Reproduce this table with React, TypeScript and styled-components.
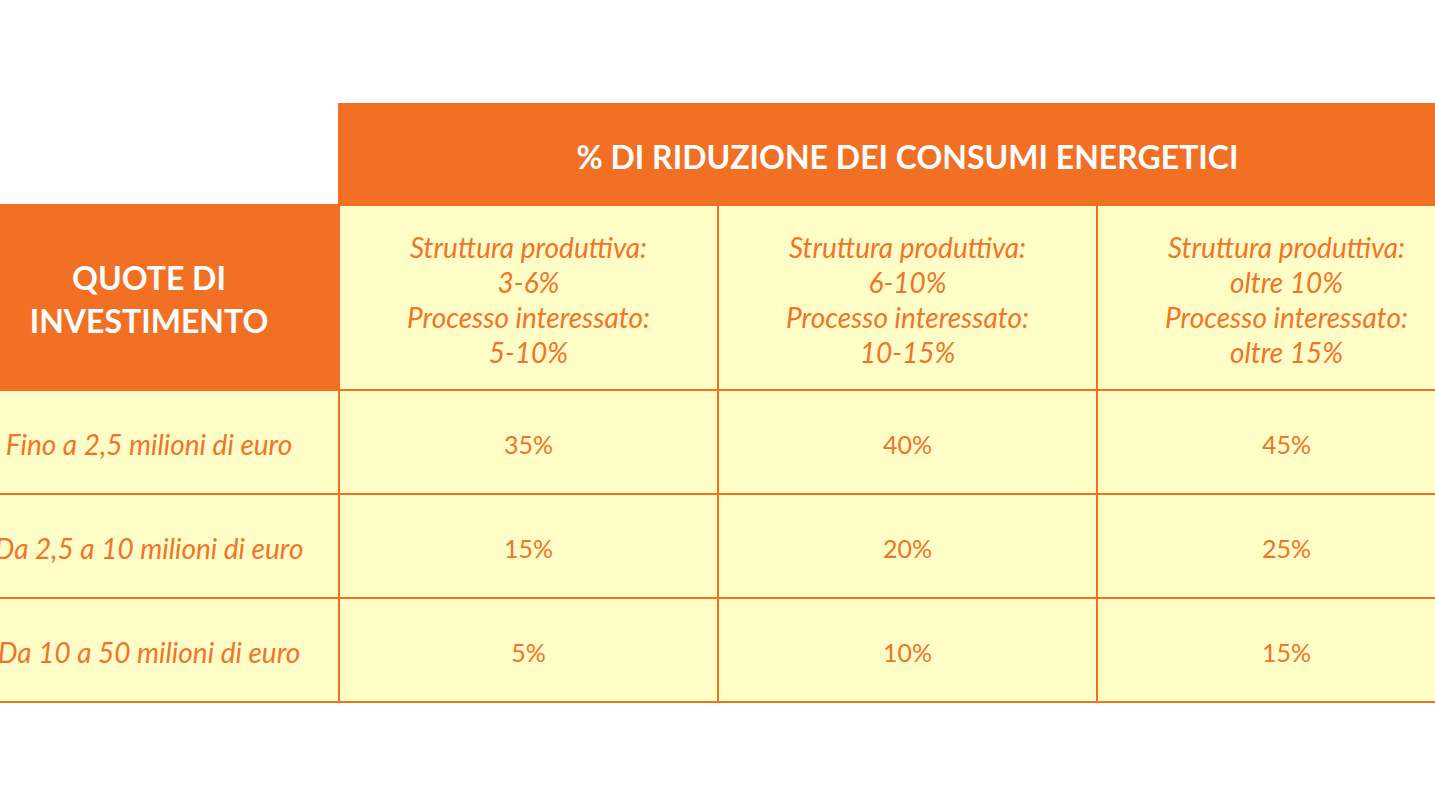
import styled, { createGlobalStyle } from "styled-components";

const GlobalStyle = createGlobalStyle`
	html, body {
		margin: 0;
		padding: 0;
		background: #ffffff;
		overflow: hidden;
	}
	body {
		font-family: "Lato", "Noto Sans", sans-serif;
	}
`;

const ORANGE = "#F27024";
const TEXT = "#F3732A";
const CREAM = "#FFFEC6";

const Page = styled.main`
	width: 1435px;
	height: 806px;
	padding-top: 103px;
	box-sizing: border-box;
	overflow: hidden;
`;

const Table = styled.div`
	display: grid;
	grid-template-columns: 378px 377px 377px 377px;
	grid-template-rows: 101px 183px 102px 102px 102px;
	gap: 2px;
	padding-bottom: 2px;
	margin-left: -40px;
	width: max-content;
	background: ${ORANGE};
`;

const Corner = styled.div`
	background: #ffffff;
`;

const TitleCell = styled.div`
	grid-column: 2 / span 3;
	background: ${ORANGE};
	color: #ffffff;
	display: flex;
	align-items: center;
	justify-content: center;
	padding-top: 6px;
	font-weight: 700;
	font-size: 32px;
`;

const SideHead = styled.div`
	background: ${ORANGE};
	color: #ffffff;
	display: flex;
	align-items: center;
	justify-content: center;
	text-align: center;
	font-weight: 700;
	font-size: 32px;
	line-height: 43px;
	padding-top: 2px;
`;

const Cell = styled.div<{ $italic?: boolean }>`
	background: ${CREAM};
	color: ${TEXT};
	display: flex;
	align-items: center;
	justify-content: center;
	text-align: center;
	padding-top: 4px;
	box-sizing: border-box;
	white-space: nowrap;
	font-size: ${(p) => (p.$italic ? "28px" : "25px")};
	line-height: 35px;
	font-style: ${(p) => (p.$italic ? "italic" : "normal")};
`;

const ranges = [
	["3-6%", "5-10%"],
	["6-10%", "10-15%"],
	["oltre 10%", "oltre 15%"],
];

const rows = [
	{ label: "Fino a 2,5 milioni di euro", values: ["35%", "40%", "45%"] },
	{ label: "Da 2,5 a 10 milioni di euro", values: ["15%", "20%", "25%"] },
	{ label: "Da 10 a 50 milioni di euro", values: ["5%", "10%", "15%"] },
];

export default function App() {
	return (
		<>
			<GlobalStyle />
			<Page>
				<Table>
					<Corner />
					<TitleCell>% DI RIDUZIONE DEI CONSUMI ENERGETICI</TitleCell>
					<SideHead>
						QUOTE DI
						<br />
						INVESTIMENTO
					</SideHead>
					{ranges.map(([a, b]) => (
						<Cell $italic key={a}>
							<div>
								Struttura produttiva:
								<br />
								{a}
								<br />
								Processo interessato:
								<br />
								{b}
							</div>
						</Cell>
					))}
					{rows.map((row) => [
						<Cell $italic key={row.label}>
							{row.label}
						</Cell>,
						...row.values.map((v, i) => <Cell key={row.label + i}>{v}</Cell>),
					])}
				</Table>
			</Page>
		</>
	);
}
